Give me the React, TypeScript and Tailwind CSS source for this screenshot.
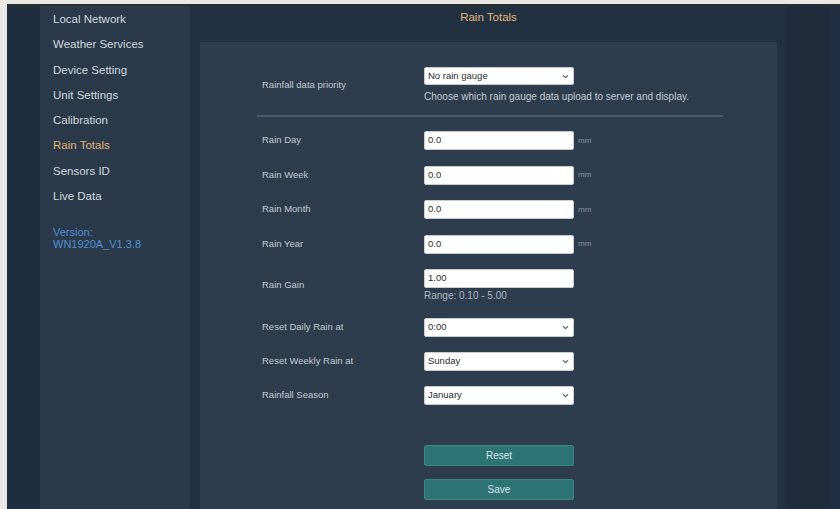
import React from "react";

const menu = [
  "Local Network",
  "Weather Services",
  "Device Setting",
  "Unit Settings",
  "Calibration",
  "Rain Totals",
  "Sensors ID",
  "Live Data",
];

function Chevron() {
  return (
    <svg width="7" height="5" viewBox="0 0 7 5" className="shrink-0">
      <path d="M1 1.2 L3.5 3.6 L6 1.2" fill="none" stroke="#6b6b6b" strokeWidth="1.3" />
    </svg>
  );
}

function SelectBox({ value, h = "h-[18.5px]" }: { value: string; h?: string }) {
  return (
    <div
      className={`w-[150px] ${h} bg-white border border-[#c9ccd0] rounded-[2px] flex items-center justify-between pl-[3px] pr-[4px] text-[9.5px] text-[#2b2b2b]`}
    >
      <span>{value}</span>
      <Chevron />
    </div>
  );
}

function InputBox({ value }: { value: string }) {
  return (
    <div className="w-[150px] h-[19px] bg-white border border-[#c9ccd0] rounded-[2px] flex items-center pl-[3px] text-[9.5px] text-[#2b2b2b]">
      {value}
    </div>
  );
}

function Row({
  label,
  children,
  className = "",
}: {
  label: string;
  children: React.ReactNode;
  className?: string;
}) {
  return (
    <div className={`flex items-center ${className}`}>
      <div className="w-[224px] pl-[62px] shrink-0 text-[9.5px] text-[#c4cbd2] whitespace-nowrap">
        {label}
      </div>
      {children}
    </div>
  );
}

function MmRow({ label, value, className }: { label: string; value: string; className?: string }) {
  return (
    <Row label={label} className={className}>
      <InputBox value={value} />
      <span className="ml-[4px] text-[8px] text-[#8995a1]">mm</span>
    </Row>
  );
}

export default function App() {
  return (
    <div className="w-[840px] h-[509px] overflow-hidden bg-[#e9e8e5] pt-[4px] pl-[7px] font-['Liberation_Sans',Arial,sans-serif]">
      <div className="h-[505px] border-t-2 border-[#2c2c2c] flex">
        {/* left edge */}
        <div className="w-[33px] bg-[#1e2d3f]" />

        {/* navigation */}
        <div className="w-[150px] bg-[#2a3a4b] pl-[13px] pt-[1px]">
          {menu.map((m) => (
            <div
              key={m}
              className={`leading-[25.3px] text-[11.5px] ${
                m === "Rain Totals" ? "text-[#e2b672]" : "text-[#d2d8de]"
              }`}
            >
              {m}
            </div>
          ))}
          <div className="mt-[17px] text-[11px] leading-[12px] text-[#4f91d2]">
            <div>Version:</div>
            <div>WN1920A_V1.3.8</div>
          </div>
        </div>

        {/* main column */}
        <div className="w-[597px] bg-[#213142] flex flex-col px-[10px]">
          <div className="h-[36px] pt-[4px] text-center text-[11.5px] leading-[14px] text-[#e2b672]">
            Rain Totals
          </div>
          <div className="flex-1 bg-[#2d3d4e] pt-[25px] flex flex-col">
            <Row label="Rainfall data priority">
              <div className="flex flex-col">
                <SelectBox value="No rain gauge" h="h-[18px]" />
                <div className="mt-[6px] text-[10px] leading-[12px] text-[#c4cbd2] whitespace-nowrap">
                  Choose which rain gauge data upload to server and display.
                </div>
              </div>
            </Row>

            <div className="mt-[12px] ml-[57px] w-[466px] h-[2px] bg-[#475b6c]" />

            <MmRow label="Rain Day" value="0.0" className="mt-[14px]" />
            <MmRow label="Rain Week" value="0.0" className="mt-[15.5px]" />
            <MmRow label="Rain Month" value="0.0" className="mt-[15.5px]" />
            <MmRow label="Rain Year" value="0.0" className="mt-[15.5px]" />

            <Row label="Rain Gain" className="mt-[15.5px]">
              <div className="flex flex-col">
                <InputBox value="1.00" />
                <div className="mt-[2px] text-[10px] leading-[12px] text-[#aeb8c2]">
                  Range: 0.10 - 5.00
                </div>
              </div>
            </Row>

            <Row label="Reset Daily Rain at" className="mt-[16px]">
              <SelectBox value="0:00" />
            </Row>
            <Row label="Reset Weekly Rain at" className="mt-[15.5px]">
              <SelectBox value="Sunday" />
            </Row>
            <Row label="Rainfall Season" className="mt-[15.5px]">
              <SelectBox value="January" />
            </Row>

            <div className="ml-[224px] mt-[40.5px] w-[150px] h-[21px] bg-[#2e7476] border border-[#3a8587] rounded-[2px] flex items-center justify-center text-[10px] text-[#d3e6e6]">
              Reset
            </div>
            <div className="ml-[224px] mt-[13px] w-[150px] h-[21px] bg-[#2e7476] border border-[#3a8587] rounded-[2px] flex items-center justify-center text-[10px] text-[#d3e6e6]">
              Save
            </div>
          </div>
        </div>

        {/* right edge */}
        <div className="w-[43px] bg-[#1e2c3b]" />
        <div className="w-[10px] bg-[#1f2e43]" />
      </div>
    </div>
  );
}
